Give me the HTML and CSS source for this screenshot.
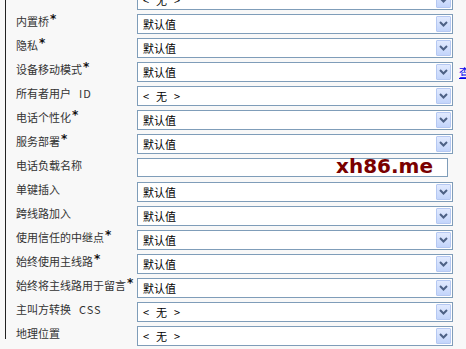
FILE: index.html
```html
<!DOCTYPE html>
<html>
<head>
<meta charset="utf-8">
<link rel="stylesheet" href="styles.css">
</head>
<body>
<div class="page">
  <div class="form">
    <div class="row"><div class="label"></div><div class="select"><span class="val none"><span>&lt;</span><span>无</span><span>&gt;</span></span><span class="btn"><svg width="9" height="6" viewBox="0 0 9 6"><path d="M1 1 L4.5 4.5 L8 1" fill="none" stroke="#4d6185" stroke-width="2"/></svg></span></div></div>
    <div class="row"><div class="label">内置桥<span class="req">*</span></div><div class="select"><span class="val">默认值</span><span class="btn"><svg width="9" height="6" viewBox="0 0 9 6"><path d="M1 1 L4.5 4.5 L8 1" fill="none" stroke="#4d6185" stroke-width="2"/></svg></span></div></div>
    <div class="row"><div class="label">隐私<span class="req">*</span></div><div class="select"><span class="val">默认值</span><span class="btn"><svg width="9" height="6" viewBox="0 0 9 6"><path d="M1 1 L4.5 4.5 L8 1" fill="none" stroke="#4d6185" stroke-width="2"/></svg></span></div></div>
    <div class="row"><div class="label">设备移动模式<span class="req">*</span></div><div class="select"><span class="val">默认值</span><span class="btn"><svg width="9" height="6" viewBox="0 0 9 6"><path d="M1 1 L4.5 4.5 L8 1" fill="none" stroke="#4d6185" stroke-width="2"/></svg></span></div><a class="link" href="#">查看当前设备移动设置</a></div>
    <div class="row"><div class="label">所有者用户<span class="latin">ID</span></div><div class="select"><span class="val none"><span>&lt;</span><span>无</span><span>&gt;</span></span><span class="btn"><svg width="9" height="6" viewBox="0 0 9 6"><path d="M1 1 L4.5 4.5 L8 1" fill="none" stroke="#4d6185" stroke-width="2"/></svg></span></div></div>
    <div class="row"><div class="label">电话个性化<span class="req">*</span></div><div class="select"><span class="val">默认值</span><span class="btn"><svg width="9" height="6" viewBox="0 0 9 6"><path d="M1 1 L4.5 4.5 L8 1" fill="none" stroke="#4d6185" stroke-width="2"/></svg></span></div></div>
    <div class="row"><div class="label">服务部署<span class="req">*</span></div><div class="select"><span class="val">默认值</span><span class="btn"><svg width="9" height="6" viewBox="0 0 9 6"><path d="M1 1 L4.5 4.5 L8 1" fill="none" stroke="#4d6185" stroke-width="2"/></svg></span></div></div>
    <div class="row"><div class="label">电话负载名称</div><div class="input"><span class="mark">xh86.me</span></div></div>
    <div class="row"><div class="label">单键插入</div><div class="select"><span class="val">默认值</span><span class="btn"><svg width="9" height="6" viewBox="0 0 9 6"><path d="M1 1 L4.5 4.5 L8 1" fill="none" stroke="#4d6185" stroke-width="2"/></svg></span></div></div>
    <div class="row"><div class="label">跨线路加入</div><div class="select"><span class="val">默认值</span><span class="btn"><svg width="9" height="6" viewBox="0 0 9 6"><path d="M1 1 L4.5 4.5 L8 1" fill="none" stroke="#4d6185" stroke-width="2"/></svg></span></div></div>
    <div class="row"><div class="label">使用信任的中继点<span class="req">*</span></div><div class="select"><span class="val">默认值</span><span class="btn"><svg width="9" height="6" viewBox="0 0 9 6"><path d="M1 1 L4.5 4.5 L8 1" fill="none" stroke="#4d6185" stroke-width="2"/></svg></span></div></div>
    <div class="row"><div class="label">始终使用主线路<span class="req">*</span></div><div class="select"><span class="val">默认值</span><span class="btn"><svg width="9" height="6" viewBox="0 0 9 6"><path d="M1 1 L4.5 4.5 L8 1" fill="none" stroke="#4d6185" stroke-width="2"/></svg></span></div></div>
    <div class="row"><div class="label">始终将主线路用于留言<span class="req">*</span></div><div class="select"><span class="val">默认值</span><span class="btn"><svg width="9" height="6" viewBox="0 0 9 6"><path d="M1 1 L4.5 4.5 L8 1" fill="none" stroke="#4d6185" stroke-width="2"/></svg></span></div></div>
    <div class="row"><div class="label">主叫方转换<span class="latin">CSS</span></div><div class="select"><span class="val none"><span>&lt;</span><span>无</span><span>&gt;</span></span><span class="btn"><svg width="9" height="6" viewBox="0 0 9 6"><path d="M1 1 L4.5 4.5 L8 1" fill="none" stroke="#4d6185" stroke-width="2"/></svg></span></div></div>
    <div class="row"><div class="label">地理位置</div><div class="select"><span class="val none"><span>&lt;</span><span>无</span><span>&gt;</span></span><span class="btn"><svg width="9" height="6" viewBox="0 0 9 6"><path d="M1 1 L4.5 4.5 L8 1" fill="none" stroke="#4d6185" stroke-width="2"/></svg></span></div></div>
  </div>
</div>
</body>
</html>
```
FILE: styles.css
```css
html, body {
  margin: 0;
  padding: 0;
  background: #f8f8f8;
  overflow: hidden;
}
body {
  width: 466px;
  height: 349px;
  font-family: "Noto Sans CJK SC", "DejaVu Sans", sans-serif;
  font-size: 11px;
  color: #222;
}
.page {
  margin-left: 5px;
  border-left: 1px solid #222;
  height: 349px;
}
.form {
  display: flex;
  flex-direction: column;
  margin-top: -10px;
  padding-left: 10px;
}
.row {
  display: flex;
  align-items: flex-start;
  height: 24px;
  white-space: nowrap;
}
.label {
  width: 121px;
  flex: none;
  line-height: 14px;
  color: #333;
}
.latin {
  margin-left: 8px;
  letter-spacing: 1px;
}
.req {
  font-family: "DejaVu Sans", sans-serif;
  font-weight: bold;
  font-size: 12px;
  position: relative;
  top: -3px;
  margin-left: 1px;
  color: #111;
}
.select {
  width: 316px;
  height: 20px;
  box-sizing: border-box;
  border: 1px solid #7f9db9;
  background: #fff;
  display: flex;
  align-items: center;
  justify-content: space-between;
  flex: none;
}
.val {
  padding-left: 5px;
  color: #000;
  line-height: 18px;
}
.val.none {
  display: flex;
  gap: 7px;
}
.btn {
  width: 15px;
  height: 16px;
  margin-right: 1px;
  box-sizing: border-box;
  border: 1px solid #b5c8f2;
  border-radius: 1px;
  background: linear-gradient(#e1eafe, #c3d5fb);
  display: flex;
  align-items: center;
  justify-content: center;
}
.input {
  width: 311px;
  height: 19px;
  box-sizing: border-box;
  border: 1px solid #7f9db9;
  background: #fff;
  flex: none;
  position: relative;
}
.mark {
  position: absolute;
  left: 198px;
  top: -5px;
  font-family: "DejaVu Sans", sans-serif;
  font-weight: bold;
  font-size: 20px;
  color: #7a0000;
  line-height: 24px;
}
.link {
  margin-left: 6px;
  color: #0000ee;
  text-decoration: underline;
  line-height: 20px;
}
```
